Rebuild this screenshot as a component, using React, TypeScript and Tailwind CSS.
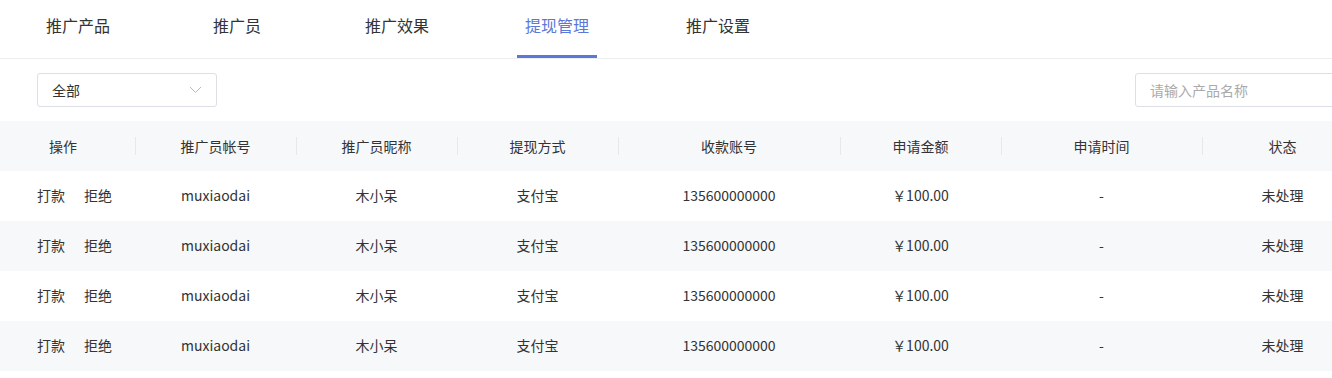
const tabs = [
  { label: '推广产品', gap: 'ml-[38px]' },
  { label: '推广员', gap: 'ml-[87px]' },
  { label: '推广效果', gap: 'ml-[88px]' },
  { label: '提现管理', gap: 'ml-[80px]', active: true },
  { label: '推广设置', gap: 'ml-[81px]' },
]

const cols = [
  { title: '操作', w: 'w-[135px]' },
  { title: '推广员帐号', w: 'w-[161px]' },
  { title: '推广员昵称', w: 'w-[161px]' },
  { title: '提现方式', w: 'w-[161px]' },
  { title: '收款账号', w: 'w-[222px]' },
  { title: '申请金额', w: 'w-[161px]' },
  { title: '申请时间', w: 'w-[201px]' },
  { title: '状态', w: 'w-[161px]' },
]

const rows = [0, 1, 2, 3].map(() => ({
  account: 'muxiaodai',
  nick: '木小呆',
  method: '支付宝',
  card: '135600000000',
  amount: '￥100.00',
  time: '-',
  status: '未处理',
}))

export default function App() {
  return (
    <div className="w-full h-[378px] overflow-hidden bg-white text-[#333] font-['Microsoft_YaHei','Noto_Sans_CJK_SC',sans-serif]">
      <div className="w-[1365px]">
        {/* tabs */}
        <div className="flex h-[59px] border-b border-[#eeeeee]">
          {tabs.map(t => (
            <div
              key={t.label}
              className={`${t.gap} h-[58px] px-2 pt-[13px] text-[16px] leading-[24px] border-b-[3px] ${
                t.active ? 'text-[#5b78d9] border-[#5b78d9]' : 'border-transparent'
              }`}
            >
              {t.label}
            </div>
          ))}
        </div>

        {/* filters */}
        <div className="flex items-center py-[14px]">
          <div className="ml-[37px] w-[180px] h-[34px] border border-[#dcdfe6] rounded-[3px] flex items-center justify-between pl-[14px] pr-[14px] text-[14px]">
            <span>全部</span>
            <svg width="13" height="8" viewBox="0 0 13 8" fill="none">
              <path d="M1 1l5.5 5.5L12 1" stroke="#b8b8b8" strokeWidth="1" />
            </svg>
          </div>
          <div className="ml-[918px] w-[220px] h-[34px] border border-[#dcdfe6] rounded-[3px] flex items-center pl-[14px] text-[14px] text-[#aaaaaa]">
            请输入产品名称
          </div>
        </div>

        {/* table */}
        <div className="text-[14px] leading-[20px]">
          <div className="flex h-[50px] bg-[#f7f8fa] items-center pb-px">
            {cols.map((c, i) => (
              <div key={c.title} className={`${c.w} relative flex items-center ${i === 0 ? 'pl-[49px]' : 'justify-center'}`}>
                {i > 0 && <span className="absolute left-0 top-1/2 -translate-y-1/2 h-[18px] w-px bg-[#e6e8eb]" />}
                {c.title}
              </div>
            ))}
          </div>
          {rows.map((r, idx) => (
            <div key={idx} className={`flex h-[50px] items-center pb-[2px] ${idx % 2 === 1 ? 'bg-[#f7f8fa]' : 'bg-white'}`}>
              <div className="w-[135px] pl-[37px] flex gap-[19px]">
                <span>打款</span>
                <span>拒绝</span>
              </div>
              <div className="w-[161px] text-center">{r.account}</div>
              <div className="w-[161px] text-center">{r.nick}</div>
              <div className="w-[161px] text-center">{r.method}</div>
              <div className="w-[222px] text-center">{r.card}</div>
              <div className="w-[161px] text-center">{r.amount}</div>
              <div className="w-[201px] text-center">{r.time}</div>
              <div className="w-[161px] text-center">{r.status}</div>
            </div>
          ))}
        </div>
      </div>
    </div>
  )
}
